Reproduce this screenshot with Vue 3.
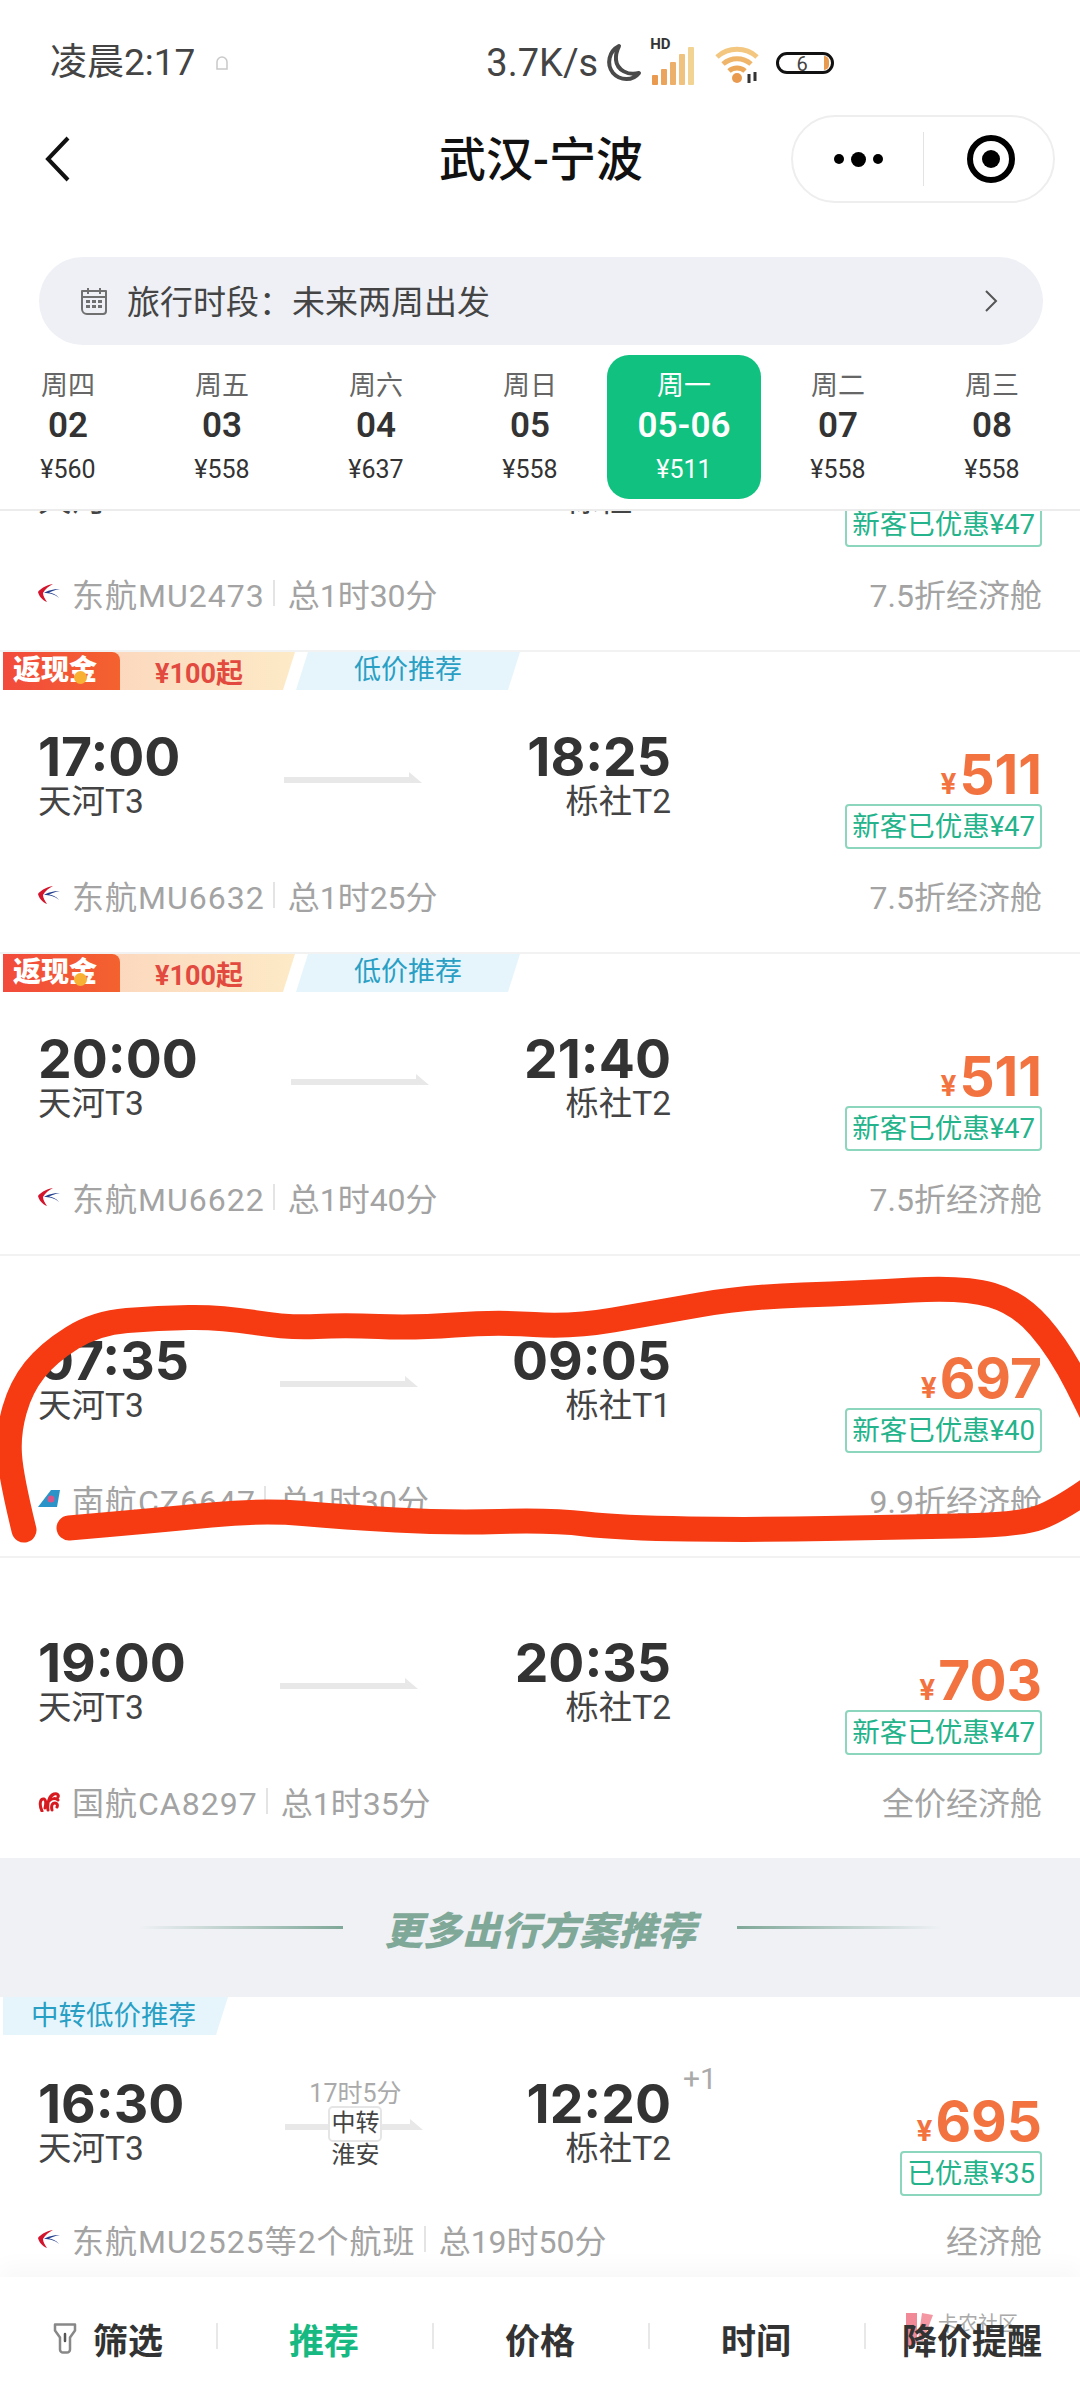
<template>
  <div class="page">
    <div class="head">
      <!-- 状态栏 -->
      <div class="status">
        <span class="clock">凌晨2:17</span>
        <svg class="ghost" width="14" height="18" viewBox="0 0 14 18"><path d="M2 15V8a5 5 0 0 1 10 0v7z" fill="none" stroke="#c9c9c9" stroke-width="1.5" /></svg>
        <div class="status-right">
          <span class="speed">3.7K/s</span>
          <svg width="38" height="42" viewBox="0 0 38 42"><path d="M15 4C5 9 2 22 9 31c7 8 20 8 26 0-11 3-22-3-23-13-.5-6 1-10 3-14z" fill="none" stroke="#4a4a4a" stroke-width="4" stroke-linejoin="round" /></svg>
          <div class="signal">
            <b>HD</b>
            <svg width="44" height="40" viewBox="0 0 44 40">
              <rect x="0" y="30" width="6" height="10" rx="1" fill="#e99a4f" />
              <rect x="9" y="24" width="6" height="16" rx="1" fill="#eba45c" />
              <rect x="18" y="17" width="6" height="23" rx="1" fill="#edb06a" />
              <rect x="27" y="9" width="6" height="31" rx="1" fill="#f0c27f" />
              <rect x="36" y="2" width="6" height="38" rx="1" fill="#f3d394" />
            </svg>
          </div>
          <svg class="wifi" width="48" height="42" viewBox="0 0 48 42">
            <path d="M3 15a30 30 0 0 1 40 0" fill="none" stroke="#f3c77f" stroke-width="5" />
            <path d="M9 22a21 21 0 0 1 28 0" fill="none" stroke="#efb56a" stroke-width="5" />
            <path d="M15 29a12 12 0 0 1 16 0" fill="none" stroke="#eca758" stroke-width="5" />
            <circle cx="23" cy="36" r="5" fill="#e99a4f" />
            <path d="M35 32v9M41 30v9" stroke="#333" stroke-width="3" />
          </svg>
          <div class="battery"><span>6</span><i></i></div>
        </div>
      </div>
      <!-- 导航 -->
      <div class="nav">
        <svg class="back" width="28" height="48" viewBox="0 0 28 48"><path d="M24 3 4 24l20 21" fill="none" stroke="#111" stroke-width="4" /></svg>
        <div class="title">武汉-宁波</div>
        <div class="capsule">
          <div class="dots"><i></i><i class="big"></i><i></i></div>
          <div class="line"></div>
          <svg width="50" height="50" viewBox="0 0 50 50"><circle cx="25" cy="25" r="21" fill="none" stroke="#000" stroke-width="6" /><circle cx="25" cy="25" r="9" fill="#000" /></svg>
        </div>
      </div>
      <div class="period">
        <svg width="28" height="28" viewBox="0 0 28 28">
          <path d="M2 4h24v20a3 3 0 0 1-3 3H7a5 5 0 0 1-5-5z" fill="none" stroke="#707070" stroke-width="2" stroke-linejoin="round" />
          <path d="M2 10h24M8 1v6M20 1v6" stroke="#707070" stroke-width="2" />
          <path d="M6 14.500h16M6 19.500h16" stroke="#707070" stroke-width="3" stroke-dasharray="4 2" />
        </svg>
        <span class="period-text">旅行时段：未来两周出发</span>
        <svg class="period-arrow" width="14" height="24" viewBox="0 0 14 24"><path d="M2 2l10 10L2 22" fill="none" stroke="#555" stroke-width="2" /></svg>
      </div>
      <div class="dates">
        <div v-for="d in dates" :key="d.day" class="date" :class="{ on: d.on }">
          <div class="date-week">{{ d.week }}</div>
          <div class="date-day">{{ d.day }}</div>
          <div class="date-price">{{ d.price }}</div>
        </div>
      </div>
    </div>

    <div class="list">
      <div class="scroller">
        <template v-for="(f, i) in flights" :key="i">
          <div v-if="f.banner" class="banner">
            <i class="rule left"></i>
            <span>更多出行方案推荐</span>
            <i class="rule right"></i>
          </div>
          <div class="card" :class="{ last: f.transfer }">
            <div class="tags">
              <template v-if="f.promo">
                <div class="tag-cash"><span class="cash-label">返现金</span><span class="cash-value">¥100起</span></div>
                <div class="tag-low">低价推荐</div>
              </template>
              <div v-if="f.transfer" class="tag-low small">中转低价推荐</div>
            </div>
            <div class="main">
              <div class="trip">
                <div class="point">
                  <div class="time">{{ f.dep }}</div>
                  <div class="station">{{ f.depAt }}</div>
                </div>
                <div class="route">
                  <svg width="140" height="11" viewBox="0 0 140 11"><polygon points="0,5 125,5 125,0 138,11 0,11" fill="#e8e8e8" /></svg>
                  <template v-if="f.transfer">
                    <div class="route-time">17时5分</div>
                    <div class="route-box">中转</div>
                    <div class="route-city">淮安</div>
                  </template>
                </div>
                <div class="point end">
                  <div class="time">{{ f.arr }}</div>
                  <div class="station">{{ f.arrAt }}</div>
                  <span v-if="f.transfer" class="plus">+1</span>
                </div>
              </div>
              <div class="fare">
                <div class="price"><small>¥</small>{{ f.price }}</div>
                <div class="discount">{{ f.discount }}</div>
              </div>
            </div>
            <div class="info">
              <svg v-if="f.air === 'mu'" class="logo" width="22" height="18" viewBox="0 0 22 18">
                <path d="M15 0C8 1 2 5 0 8c1 4 4 8 9 10-2-3-4-6-4-9 2-4 6-7 10-9z" fill="#d3142c" />
                <path d="M22 5C15 5 9 7 6 9c5 0 11 1 15 5-3-4-7-5-10-5.500 3-1.500 7-3 11-3.500z" fill="#25408f" />
              </svg>
              <svg v-else-if="f.air === 'cz'" class="logo" width="22" height="18" viewBox="0 0 22 18">
                <path d="M13 0h9l-3 17H0z" fill="#2a93c8" />
                <circle cx="13" cy="9" r="3.500" fill="#d8558a" />
              </svg>
              <svg v-else class="logo" width="22" height="22" viewBox="0 0 22 22">
                <path d="M4 21C1 15 2 8 6 9c2 1 2 5 1 9M10 20c-1-7 1-14 6-16 3-1 5 1 4 3M11 11c3-3 7-3 9-1M14 20c-1-4 0-7 3-7 2 0 3 2 2 4" fill="none" stroke="#d71920" stroke-width="3" stroke-linecap="round" />
              </svg>
              <span class="flight">{{ f.flight }}</span>
              <i class="sep"></i>
              <span>{{ f.total }}</span>
              <span class="cabin">{{ f.cabin }}</span>
            </div>
          </div>
        </template>
      </div>
    </div>

    <div class="tabs">
      <!-- 水印,压在文字下面 -->
      <div class="mark">
        <svg width="30" height="36" viewBox="0 0 30 36"><path d="M1 0h11v30l-11 4z" fill="#ef6b7c" opacity=".8" /><path d="M17 0l11 2-10 26-5-1z" fill="#ef6b7c" opacity=".7" /></svg>
        <span>卡农社区</span>
      </div>
      <div v-for="(t, i) in tabs" :key="t" class="tab" :class="{ on: i === 1 }">
        <svg v-if="i === 0" width="24" height="32" viewBox="0 0 24 32">
          <path d="M2 1.500h20v6l-5 7v12a3 3 0 0 1-3 3h-4a3 3 0 0 1-3-3v-12l-5-7z" fill="none" stroke="#888" stroke-width="2.500" stroke-linejoin="round" />
          <path d="M12 11v7" stroke="#555" stroke-width="2.500" stroke-linecap="round" />
        </svg>
        <span>{{ t }}</span>
      </div>
    </div>

    <!-- 截图上手绘的红圈 -->
    <svg class="scribble" width="1080" height="2400" viewBox="0 0 1080 2400">
      <path :d="scribble" fill="none" stroke="#f63a12" stroke-width="25" stroke-linecap="round" stroke-linejoin="round" />
    </svg>
  </div>
</template>

<script setup>
const dates = [
  { week: '周四', day: '02', price: '¥560' },
  { week: '周五', day: '03', price: '¥558' },
  { week: '周六', day: '04', price: '¥637' },
  { week: '周日', day: '05', price: '¥558' },
  { week: '周一', day: '05-06', price: '¥511', on: true },
  { week: '周二', day: '07', price: '¥558' },
  { week: '周三', day: '08', price: '¥558' }
]

const flights = [
  { dep: '15:00', depAt: '天河T3', arr: '16:30', arrAt: '栎社T2', price: '511', discount: '新客已优惠¥47', air: 'mu', flight: '东航MU2473', total: '总1时30分', cabin: '7.5折经济舱' },
  { promo: true, dep: '17:00', depAt: '天河T3', arr: '18:25', arrAt: '栎社T2', price: '511', discount: '新客已优惠¥47', air: 'mu', flight: '东航MU6632', total: '总1时25分', cabin: '7.5折经济舱' },
  { promo: true, dep: '20:00', depAt: '天河T3', arr: '21:40', arrAt: '栎社T2', price: '511', discount: '新客已优惠¥47', air: 'mu', flight: '东航MU6622', total: '总1时40分', cabin: '7.5折经济舱' },
  { dep: '07:35', depAt: '天河T3', arr: '09:05', arrAt: '栎社T1', price: '697', discount: '新客已优惠¥40', air: 'cz', flight: '南航CZ6647', total: '总1时30分', cabin: '9.9折经济舱' },
  { dep: '19:00', depAt: '天河T3', arr: '20:35', arrAt: '栎社T2', price: '703', discount: '新客已优惠¥47', air: 'ca', flight: '国航CA8297', total: '总1时35分', cabin: '全价经济舱' },
  { banner: true, transfer: true, dep: '16:30', depAt: '天河T3', arr: '12:20', arrAt: '栎社T2', price: '695', discount: '已优惠¥35', air: 'mu', flight: '东航MU2525等2个航班', total: '总19时50分', cabin: '经济舱' }
]

const tabs = ['筛选', '推荐', '价格', '时间', '降价提醒']

// 红圈轨迹,取相邻点中点做平滑
const stroke = [
  [24, 1530], [11, 1477], [8, 1433], [21, 1387], [48, 1353], [96, 1323], [158, 1318], [220, 1317], [289, 1328], [344, 1325],
  [413, 1328], [496, 1322], [572, 1327], [654, 1313], [744, 1297], [861, 1293], [964, 1287], [1019, 1303], [1060, 1350], [1095, 1420]
]
const stroke2 = [
  [1095, 1485], [1060, 1510], [1019, 1525], [895, 1527], [758, 1530], [620, 1528], [551, 1520], [448, 1523], [344, 1517], [262, 1510], [160, 1520], [69, 1528]
]
const smooth = (pts) => {
  let d = `M${pts[0][0]} ${pts[0][1]}`
  for (let i = 1; i < pts.length - 1; i++) {
    const mx = (pts[i][0] + pts[i + 1][0]) / 2
    const my = (pts[i][1] + pts[i + 1][1]) / 2
    d += ` Q${pts[i][0]} ${pts[i][1]} ${mx} ${my}`
  }
  const end = pts[pts.length - 1]
  return d + ` L${end[0]} ${end[1]}`
}
const scribble = smooth(stroke) + ' ' + smooth(stroke2)
</script>

<style>
html, body {
  margin: 0;
  background: #fff;
}
</style>

<style scoped>
.page {
  position: relative;
  display: flex;
  flex-direction: column;
  width: 1080px;
  height: 2400px;
  overflow: hidden;
  background: #fff;
  font-family: Roboto, "Noto Sans CJK SC", sans-serif;
  color: #333;
}
.head {
  flex: none;
  height: 511px;
  box-sizing: border-box;
  border-bottom: 2px solid #ececec;
}
.status {
  display: flex;
  align-items: center;
  height: 100px;
  padding: 26px 0 0 50px;
  box-sizing: border-box;
  color: #444;
}
.clock {
  font-size: 37px;
  line-height: 44px;
}
.speed {
  font-size: 38px;
  line-height: 44px;
  margin-right: 6px;
}
.ghost {
  margin-left: 20px;
}
.status-right {
  display: flex;
  align-items: center;
  margin-left: 257px;
}
.signal {
  position: relative;
  margin-left: 10px;
  padding-top: 4px;
  height: 40px;
}
.signal b {
  position: absolute;
  left: -2px;
  top: -6px;
  font-size: 15px;
  color: #333;
}
.wifi {
  margin-left: 18px;
}
.battery {
  position: relative;
  width: 58px;
  height: 22px;
  margin-left: 14px;
  border: 3px solid #111;
  border-radius: 12px;
  box-sizing: border-box;
  font-size: 20px;
  line-height: 18px;
  text-align: center;
}
.battery span {
  display: block;
  margin-right: 6px;
}
.battery i {
  position: absolute;
  right: 2px;
  top: 1px;
  width: 5px;
  height: 14px;
  border-radius: 0 6px 6px 0;
  background: #e89a4f;
}
.nav {
  display: grid;
  grid-template-columns: 264px 1fr 264px;
  align-items: center;
  height: 88px;
  margin-top: 15px;
  padding: 0 25px 0 27px;
}
.back {
  display: block;
  margin-left: 17px;
}
.title {
  margin-top: -7px;
  font-size: 47px;
  font-weight: 500;
  text-align: center;
  color: #111;
}
.capsule {
  display: flex;
  align-items: center;
  width: 264px;
  height: 88px;
  box-sizing: border-box;
  border: 2px solid #eeeeee;
  border-radius: 44px;
}
.dots {
  display: flex;
  align-items: center;
  justify-content: center;
  gap: 7px;
  width: 130px;
}
.dots i {
  width: 10px;
  height: 10px;
  border-radius: 50%;
  background: #000;
}
.dots i.big {
  width: 15px;
  height: 15px;
}
.line {
  width: 1px;
  height: 54px;
  background: #e3e3e3;
}
.capsule svg {
  margin-left: 42px;
}
.period {
  display: flex;
  align-items: center;
  height: 88px;
  margin: 54px 37px 0 39px;
  padding: 0 45px 0 41px;
  border-radius: 44px;
  background: #eef0f5;
}
.period-text {
  margin: -3px 0 0 19px;
  font-size: 33px;
  color: #444;
}
.period-arrow {
  margin-left: auto;
}
.dates {
  display: grid;
  grid-template-columns: repeat(7, 154px);
  margin: 10px 0 0 -9px;
}
.date {
  height: 144px;
  border-radius: 22px;
  text-align: center;
}
.date.on {
  background: #10c17f;
  color: #fff;
}
.date-week {
  padding-top: 14px;
  font-size: 27px;
  line-height: 34px;
  color: #666;
}
.date-day {
  margin-top: 3px;
  font-size: 35px;
  font-weight: 600;
  line-height: 40px;
}
.date-price {
  margin-top: 7px;
  font-size: 25px;
  line-height: 34px;
}
.date.on .date-week, .date.on .date-price {
  color: #fff;
}
.list {
  flex: 1;
  overflow: hidden;
}
.scroller {
  margin-top: -163px;
}
.card {
  box-sizing: border-box;
  height: 302px;
  padding: 0 38px;
  border-top: 2px solid #f2f2f2;
}
.card.last {
  height: 278px;
  border-top: none;
}
.tags {
  display: flex;
  height: 38px;
  margin-left: -35px;
}
.tag-cash {
  display: flex;
  align-items: center;
  width: 292px;
  height: 38px;
  background: linear-gradient(90deg, #fbcdb9, #fdeac6);
  clip-path: polygon(0 0, 100% 0, calc(100% - 12px) 100%, 0 100%);
}
.cash-label {
  position: relative;
  width: 117px;
  height: 38px;
  box-sizing: border-box;
  padding-left: 10px;
  background: linear-gradient(90deg, #f24a3c, #f4622f);
  border-radius: 0 8px 0 0;
  font-size: 28px;
  font-weight: 900;
  line-height: 38px;
  color: #fff;
}
.cash-label::after {
  content: "";
  position: absolute;
  left: 71px;
  top: 19px;
  width: 13px;
  height: 13px;
  border-radius: 50%;
  background: #f8b133;
}
.cash-value {
  margin-left: 35px;
  font-size: 27px;
  font-weight: 700;
  color: #e2493f;
}
.tag-low {
  width: 224px;
  height: 38px;
  margin-left: 1px;
  background: #e6f5fc;
  clip-path: polygon(12px 0, 100% 0, calc(100% - 12px) 100%, 0 100%);
  font-size: 27px;
  line-height: 37px;
  text-align: center;
  color: #2a9fc4;
}
.tag-low.small {
  width: 225px;
  margin-left: 0;
  padding-right: 4px;
  box-sizing: border-box;
  font-size: 27.500px;
  clip-path: polygon(0 0, 100% 0, calc(100% - 12px) 100%, 0 100%);
}
.main {
  display: flex;
  height: 145px;
  margin-top: 40px;
}
.card.last .main {
  margin-top: 42px;
  height: 142px;
}
.trip {
  display: flex;
  justify-content: space-between;
  width: 633px;
}
.point {
  position: relative;
}
.point.end {
  text-align: right;
}
.time {
  font-family: Inter, Roboto, sans-serif;
  font-size: 53.500px;
  font-weight: 700;
  line-height: 54px;
  color: #333;
}
.station {
  font-size: 33.500px;
  line-height: 36px;
  color: #444;
}
.plus {
  position: absolute;
  left: calc(100% + 12px);
  top: -16px;
  font-size: 30px;
  line-height: 36px;
  color: #aaa;
}
.route {
  position: relative;
  width: 140px;
  height: 11px;
  margin-top: 42px;
}
.route svg {
  display: block;
}
.route-time, .route-box, .route-city {
  position: absolute;
  left: 0;
  right: 0;
  margin: auto;
  text-align: center;
  white-space: nowrap;
}
.route-time {
  top: -40px;
  font-size: 25px;
  line-height: 30px;
  color: #aaa;
}
.route-box {
  top: -13px;
  width: 50px;
  height: 32px;
  border: 2px solid #e5e5e5;
  border-radius: 5px;
  background: #fff;
  font-size: 24px;
  line-height: 30px;
  color: #444;
}
.route-city {
  top: 21px;
  font-size: 24px;
  line-height: 30px;
  color: #444;
}
.fare {
  flex: 1;
  display: flex;
  flex-direction: column;
  align-items: flex-end;
  padding-top: 15px;
}
.price {
  font-family: Inter, Roboto, sans-serif;
  font-size: 55px;
  font-weight: 700;
  line-height: 58px;
  color: #f2733f;
}
.price small {
  margin-right: 3px;
  font-size: 28px;
  font-weight: 700;
  line-height: 0;
}
.discount {
  margin-top: 1px;
  height: 45px;
  padding: 0 5px;
  box-sizing: border-box;
  border: 2px solid #8cd6bd;
  border-radius: 4px;
  font-size: 27.500px;
  line-height: 41px;
  color: #24b38a;
}
.info {
  display: flex;
  align-items: center;
  height: 40px;
  font-size: 32px;
  color: #a3a3a3;
}
.logo {
  width: 22px;
  margin-right: 12px;
}
.flight {
  letter-spacing: 1px;
}
.sep {
  width: 2px;
  height: 26px;
  margin: 0 13px 0 8px;
  background: #e4e4e4;
}
.cabin {
  margin-left: auto;
}
.banner {
  display: flex;
  align-items: center;
  justify-content: center;
  gap: 41px;
  height: 139px;
  background: #eff1f5;
  font-size: 39px;
  font-weight: 900;
  font-style: italic;
  color: #7fa898;
}
.rule {
  width: 204px;
  height: 3px;
}
.rule.left {
  background: linear-gradient(90deg, rgba(127, 168, 152, 0), #7fa898);
}
.rule.right {
  background: linear-gradient(90deg, #7fa898, rgba(127, 168, 152, 0));
}
.tabs {
  position: relative;
  flex: none;
  display: flex;
  height: 123px;
  box-sizing: border-box;
  background: #fff;
  box-shadow: 0 -10px 22px rgba(0, 0, 0, 0.03);
}
.tab {
  flex: 1;
  display: flex;
  align-items: center;
  justify-content: center;
  gap: 16px;
  position: relative;
  font-size: 35px;
  font-weight: 700;
  color: #333;
}
.tab + .tab::before {
  content: "";
  position: absolute;
  left: 0;
  top: 46px;
  width: 2px;
  height: 26px;
  background: #e8e8e8;
}
.tab.on {
  color: #16b981;
}
.mark {
  position: absolute;
  left: 905px;
  top: 36px;
  display: flex;
}
.mark span {
  margin-left: 3px;
  font-size: 20px;
  line-height: 22px;
  color: #aaa;
}
.scribble {
  position: absolute;
  left: 0;
  top: 0;
  pointer-events: none;
}
</style>
